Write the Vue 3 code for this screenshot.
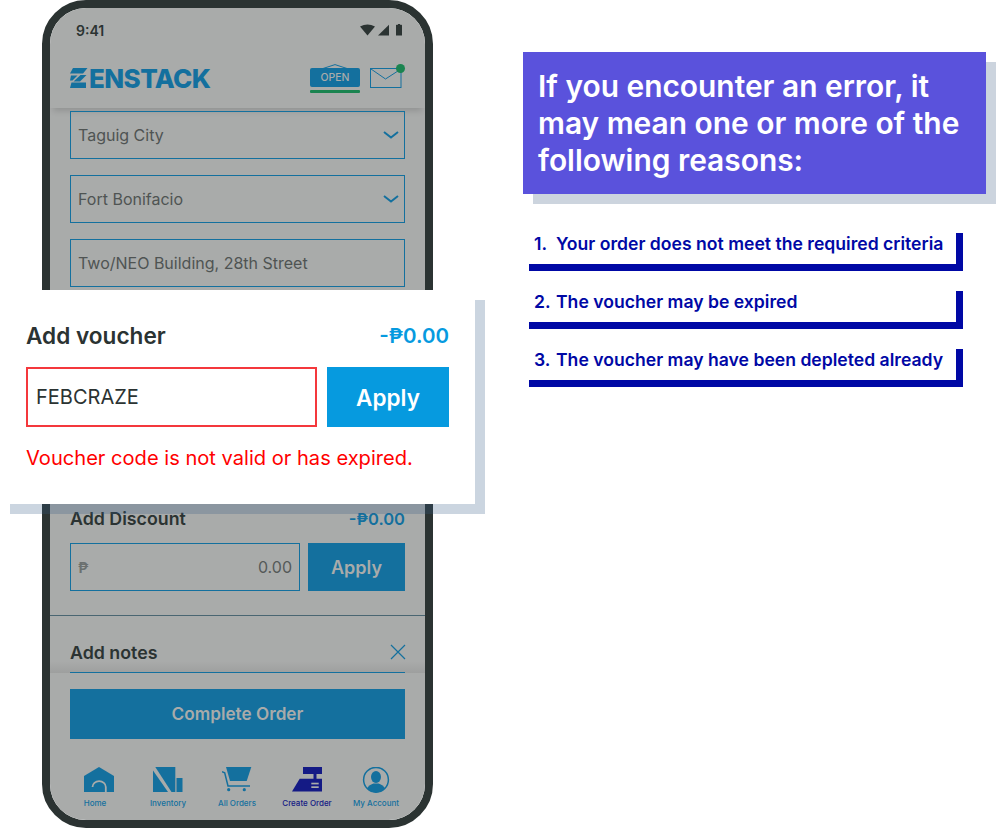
<template>
  <div class="page">
    <!-- phone with dimmed order form -->
    <div class="phone">
      <div class="screen">
        <div class="status">
          <span class="time">9:41</span>
          <svg class="status-icons" width="42" height="12" viewBox="0 0 42 12">
            <path d="M0 2.600Q7.500-1.800 15 2.600L7.500 11.500Z" fill="#2b3332" />
            <path d="M18 11.500L29 .8V11.500Z" fill="#2b3332" />
            <path d="M36 1.400Q36 .8 36.600 .8H38V0H40V.8H41.400Q42 .8 42 1.400V11.500H36Z" fill="#2b3332" />
          </svg>
        </div>

        <header class="top">
          <div class="logo">
            <svg width="18" height="20" viewBox="0 0 18 20">
              <path d="M3 0H17.500L13 5.500H0Z" fill="#14709e" />
              <path d="M1 7.500H7.500L2.500 12.500H0Z" fill="#14709e" />
              <path d="M10.500 7H16.500L10 13.500H3.500Z" fill="#14709e" />
              <path d="M1.500 14.500H16V20H0Z" fill="#14709e" />
            </svg>
            <span class="logo-text">ENSTACK</span>
          </div>
          <div class="top-right">
            <div class="open-sign">
              <svg class="sign-hook" width="26" height="5" viewBox="0 0 26 5">
                <path d="M1 4.500L13 .6L25 4.500" fill="none" stroke="#14709e" />
              </svg>
              <div class="sign-board">OPEN</div>
              <div class="sign-line"></div>
            </div>
            <div class="mail">
              <svg width="32" height="20" viewBox="0 0 32 20">
                <rect x=".5" y=".5" width="30.500" height="19" fill="none" stroke="#14709e" />
                <path d="M1 1L15.500 11L31 1" fill="none" stroke="#14709e" />
              </svg>
              <span class="mail-dot"></span>
            </div>
          </div>
        </header>

        <div class="form">
          <div class="field">
            <span>Taguig City</span>
            <svg width="16" height="8" viewBox="0 0 16 8"><path d="M1 1L8 6.500L15 1" fill="none" stroke="#14709e" stroke-width="2" /></svg>
          </div>
          <div class="field">
            <span>Fort Bonifacio</span>
            <svg width="16" height="8" viewBox="0 0 16 8"><path d="M1 1L8 6.500L15 1" fill="none" stroke="#14709e" stroke-width="2" /></svg>
          </div>
          <div class="field">
            <span>Two/NEO Building, 28th Street</span>
          </div>
        </div>

        <!-- this stretch of the form sits under the voucher card -->
        <div class="hidden-part"></div>

        <div class="discount">
          <div class="row-head">
            <span class="label">Add Discount</span>
            <span class="amount">-₱0.00</span>
          </div>
          <div class="discount-row">
            <div class="discount-input">
              <span class="peso">₱</span>
              <span>0.00</span>
            </div>
            <div class="discount-btn">Apply</div>
          </div>
        </div>

        <div class="notes">
          <div class="notes-head">
            <span class="label">Add notes</span>
            <svg class="notes-close" width="16" height="16" viewBox="0 0 16 16"><path d="M1 1L15 15M15 1L1 15" stroke="#14709e" stroke-width="1.200" /></svg>
          </div>
        </div>

        <div class="complete">Complete Order</div>

        <nav class="tabs">
          <div v-for="tab in tabs" :key="tab.name" :class="['tab', { current: tab.current }]">
            <svg width="30" height="26" viewBox="0 0 30 26" v-html="tab.icon"></svg>
            <span>{{ tab.name }}</span>
          </div>
        </nav>
      </div>
    </div>

    <!-- voucher card laid over the phone -->
    <section class="voucher">
      <div class="voucher-card">
        <div class="voucher-head">
          <h2>Add voucher</h2>
          <span class="voucher-amount">-₱0.00</span>
        </div>
        <div class="voucher-row">
          <div class="voucher-input">FEBCRAZE</div>
          <div class="voucher-btn">Apply</div>
        </div>
        <p class="voucher-error">Voucher code is not valid or has expired.</p>
      </div>
    </section>

    <aside class="reasons">
      <h1>If you encounter an error, it may mean one or more of the following reasons:</h1>
      <ol>
        <li v-for="(reason, i) in reasons" :key="i">
          <span class="num">{{ i + 1 }}.</span>
          <span>{{ reason }}</span>
        </li>
      </ol>
    </aside>
  </div>
</template>

<script setup>
const blue = '#14709e'
const navy = '#141a85'
const bg = '#a9abaa'

const tabs = [
  {
    name: 'Home',
    icon: `<path d="M0 25V9L15 0L30 9V25Z" fill="${blue}"/><path d="M8.500 20A6.500 5.800 0 0 1 21.800 20V25" fill="none" stroke="${bg}" stroke-width="1.800"/>`
  },
  {
    name: 'Inventory',
    icon: `<path d="M2.300 0H22.300V25H18.500Z" fill="${blue}"/><path d="M0 3.500L15 25H0Z" fill="${blue}"/><rect x="23.500" y="11" width="6" height="14" fill="${blue}"/>`
  },
  {
    name: 'All Orders',
    icon: `<path d="M4 0H29.300L24.700 14H8Z" fill="${blue}"/><path d="M0 4.700L2.700 5.700L6 19H28" fill="none" stroke="${blue}" stroke-width="1.500"/><circle cx="6.700" cy="22.700" r="1.600" fill="${blue}"/><circle cx="22.300" cy="22.700" r="1.600" fill="${blue}"/>`
  },
  {
    name: 'Create Order',
    current: true,
    icon: `<rect x="11" y="0" width="19" height="7" fill="${navy}"/><rect x="21.500" y="7" width="3" height="5" fill="${navy}"/><path d="M7.700 11.700H30V24.500H0Z" fill="${navy}"/><rect x="19.300" y="15.700" width="7.400" height="1.700" fill="${bg}"/><rect x="19.300" y="19.300" width="7.400" height="1.700" fill="${bg}"/>`
  },
  {
    name: 'My Account',
    icon: `<circle cx="15" cy="12.800" r="12.400" fill="none" stroke="${blue}" stroke-width="1.500"/><ellipse cx="15" cy="10" rx="5" ry="6" fill="${blue}"/><path d="M6 21.500Q7.500 18 12.500 16.500H17.500Q22.500 18 24 21.500Q20 25.500 15 25.500Q10 25.500 6 21.500Z" fill="${blue}"/>`
  }
]

const reasons = [
  'Your order does not meet the required criteria',
  'The voucher may be expired',
  'The voucher may have been depleted already'
]
</script>

<style>
body {
  background: #fff;
}
</style>

<style scoped>
.page {
  position: relative;
  display: flex;
  width: 996px;
  height: 828px;
  overflow: hidden;
  background: #fff;
  font-family: Inter, "Liberation Sans", sans-serif;
}

.phone {
  flex: none;
  width: 391px;
  height: 828px;
  margin-left: 42px;
  box-sizing: border-box;
  border: 8px solid #2b3332;
  border-radius: 44px;
  overflow: hidden;
}

.screen {
  height: 100%;
  background: #a9abaa;
  display: flex;
  flex-direction: column;
}

.status {
  display: flex;
  justify-content: space-between;
  align-items: center;
  padding: 14px 23px 0 26px;
  height: 16px;
}

.time {
  font-size: 14px;
  font-weight: 600;
  color: #2b3332;
}

.top {
  display: flex;
  justify-content: space-between;
  align-items: center;
  height: 70px;
  padding: 0 23px 0 20px;
  box-shadow: 0 6px 6px -3px rgba(0, 0, 0, .14);
}

.logo {
  display: flex;
  align-items: center;
  gap: 1px;
  padding-top: 10px;
}

.logo-text {
  font-size: 26px;
  font-weight: 800;
  letter-spacing: -.6px;
  color: #14709e;
}

.top-right {
  display: flex;
  align-items: flex-start;
  gap: 10px;
  padding-top: 11px;
}

.open-sign {
  position: relative;
  width: 50px;
  padding-top: 4px;
}

.sign-hook {
  position: absolute;
  top: 0;
  left: 12px;
}

.sign-board {
  height: 19px;
  background: #14709e;
  border-radius: 2px;
  color: #a9abaa;
  font-size: 10.500px;
  font-weight: 500;
  line-height: 20px;
  text-align: center;
}

.sign-line {
  height: 3px;
  margin-top: 3px;
  background: #1a8450;
  border-radius: 1px;
}

.mail {
  position: relative;
  padding-top: 4px;
  line-height: 0;
}

.mail-dot {
  position: absolute;
  top: 0;
  right: -3px;
  width: 9px;
  height: 9px;
  border-radius: 50%;
  background: #1a8450;
}

.form {
  display: flex;
  flex-direction: column;
  gap: 16px;
  padding: 3px 20px 0;
}

.field {
  display: flex;
  justify-content: space-between;
  align-items: center;
  height: 48px;
  box-sizing: border-box;
  padding: 0 5px 0 7px;
  border: 1px solid #14709e;
  font-size: 16px;
  color: #4f5453;
}

.hidden-part {
  flex: none;
  height: 221px;
}

.discount {
  padding: 0 20px;
}

.row-head {
  display: flex;
  justify-content: space-between;
  align-items: center;
  height: 20px;
}

.label {
  font-size: 17.800px;
  font-weight: 600;
  color: #2b3332;
}

.amount {
  padding-top: 1px;
  font-size: 16.500px;
  font-weight: 600;
  color: #14709e;
}

.discount-row {
  display: flex;
  gap: 8px;
  margin-top: 15px;
}

.discount-input {
  flex: 1;
  display: flex;
  justify-content: space-between;
  align-items: center;
  height: 48px;
  box-sizing: border-box;
  padding: 0 7px 0 7px;
  border: 1px solid #14709e;
  font-size: 16px;
  color: #555a59;
}

.peso {
  font-size: 15px;
  font-weight: 600;
  color: #6b706f;
}

.discount-btn {
  width: 97px;
  height: 48px;
  background: #14709e;
  color: #a9abaa;
  font-size: 18px;
  font-weight: 600;
  line-height: 49px;
  text-align: center;
}

.notes {
  margin-top: 24px;
  border-top: 1px solid #4a6672;
  padding: 0 20px;
  background: linear-gradient(to top, rgba(0, 0, 0, .07), transparent 12px);
}

.notes-head {
  display: flex;
  justify-content: space-between;
  align-items: center;
  height: 57px;
  border-bottom: 1px solid #14709e;
  box-sizing: border-box;
  padding-top: 16px;
}

.notes-close {
  margin-right: -1px;
}

.complete {
  flex: none;
  height: 50px;
  margin: 16px 20px 0;
  background: #14709e;
  color: #a9abaa;
  font-size: 17.200px;
  font-weight: 600;
  line-height: 50px;
  text-align: center;
}

.tabs {
  display: grid;
  grid-template-columns: 78px 68px 70px 70px 68px;
  padding: 28px 0 0 6px;
}

.tab {
  display: flex;
  flex-direction: column;
  align-items: center;
  gap: 5px;
  font-size: 8px;
  font-weight: 500;
  color: #14709e;
  white-space: nowrap;
}

.tab:first-child svg {
  margin-left: 7px;
}

.tab.current {
  color: #141a85;
}

.voucher {
  position: absolute;
  left: 10px;
  top: 290px;
  width: 475px;
  height: 224px;
}

.voucher::before {
  content: "";
  position: absolute;
  left: 0;
  right: 0;
  top: 10px;
  bottom: 0;
  background: rgba(51, 91, 134, .256);
}

.voucher-card {
  position: relative;
  width: 465px;
  height: 214px;
  box-sizing: border-box;
  padding: 30px 26px 0 16px;
  background: #fff;
}

.voucher-head {
  display: flex;
  justify-content: space-between;
  align-items: center;
  height: 30px;
}

.voucher-head h2 {
  margin: 0;
  font-size: 22.600px;
  font-weight: 600;
  color: #2b3332;
}

.voucher-amount {
  padding-top: 1px;
  font-size: 20.500px;
  font-weight: 600;
  color: #069adf;
}

.voucher-row {
  display: flex;
  gap: 10px;
  margin-top: 17px;
}

.voucher-input {
  width: 291px;
  height: 60px;
  box-sizing: border-box;
  padding: 0 8px;
  border: 2px solid #f4383c;
  font-size: 20px;
  line-height: 56px;
  color: #2b3332;
}

.voucher-btn {
  flex: 1;
  height: 60px;
  background: #069adf;
  color: #fff;
  font-size: 22.500px;
  font-weight: 600;
  line-height: 61px;
  text-align: center;
}

.voucher-error {
  margin: 19px 0 0;
  font-size: 20.100px;
  line-height: 24px;
  color: #f00;
}

.reasons {
  flex: none;
  width: 463px;
  margin: 52px 0 0 90px;
}

.reasons h1 {
  margin: 0;
  height: 142px;
  box-sizing: border-box;
  padding: 16px 15px 0;
  background: #5a52dc;
  box-shadow: 10px 10px 0 #ccd4de;
  color: #fff;
  font-size: 29.900px;
  font-weight: 600;
  line-height: 37px;
}

.reasons ol {
  list-style: none;
  margin: 39px 0 0 6px;
  padding: 0;
  display: flex;
  flex-direction: column;
  gap: 20px;
}

.reasons li {
  display: flex;
  width: 434px;
  height: 38px;
  box-sizing: border-box;
  padding: 0 0 0 5px;
  border-right: 7px solid #0008a5;
  border-bottom: 7px solid #0008a5;
  color: #0008a5;
  font-size: 17.600px;
  font-weight: 600;
  line-height: 22px;
}

.num {
  width: 22px;
}
</style>
